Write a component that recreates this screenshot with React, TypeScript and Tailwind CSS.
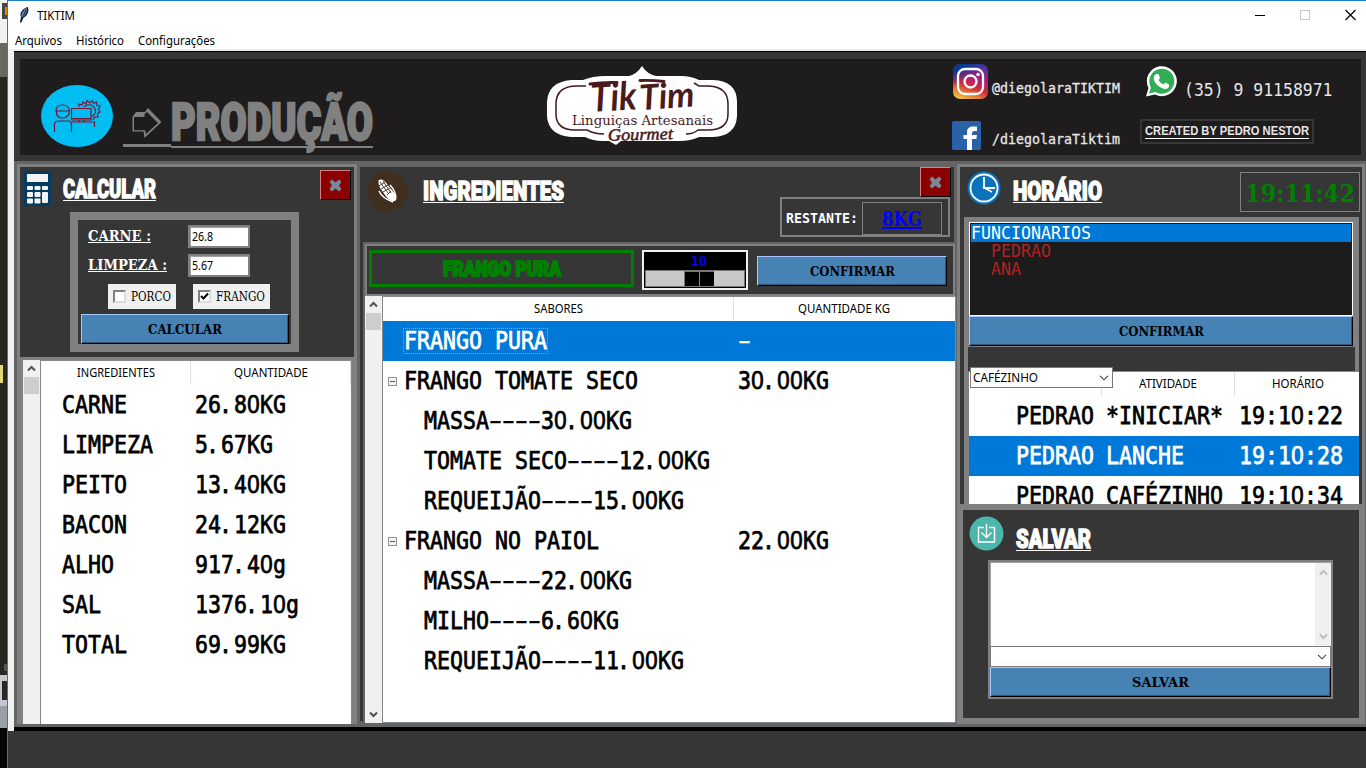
import { useLayoutEffect, useRef, useState, type ReactNode } from "react";

const UI = "font-['Noto_Sans','Open_Sans',sans-serif] text-[12px]";
const SERIF = "font-['DejaVu_Serif',serif] font-bold";
const MONO = "font-['DejaVu_Sans_Mono',monospace]";
const HEAVY = "font-['Roboto',sans-serif] font-black";

function Fit({ w, className = "", children }: { w: number; className?: string; children: ReactNode }) {
  const ref = useRef<HTMLSpanElement>(null);
  const [scale, setScale] = useState(1);
  useLayoutEffect(() => {
    if (ref.current) setScale(w / ref.current.getBoundingClientRect().width);
  }, [w]);
  return (
    <span className={`block shrink-0 whitespace-pre ${className}`} style={{ width: w }}>
      <span ref={ref} className="inline-block w-max origin-left" style={{ transform: `scaleX(${scale})` }}>
        {children}
      </span>
    </span>
  );
}

const glyphStyles: Record<string, string> = {
  "0": "inline-block w-[0.584em] text-center text-[1.03em] font-['Liberation_Sans',sans-serif] leading-none",
  "-": "inline-block w-[0.3344em] text-[1.8em] font-['Liberation_Sans',sans-serif] leading-[0.5] translate-y-[5px] scale-y-[0.55]",
  ".": "inline-block leading-none -translate-x-[0.09em]",
};

function Mono({ text, cell = 13, className = "" }: { text: string; cell?: number; className?: string }) {
  return (
    <Fit w={text.length * cell} className={`${MONO} ${className}`}>
      {text.split(/([0.-])/).map((part, i) =>
        glyphStyles[part] ? <span key={i} className={glyphStyles[part]}>{part}</span> : part,
      )}
    </Fit>
  );
}

function Heading({ text, w }: { text: string; w: number }) {
  return (
    <div className="flex flex-col text-white">
      <Fit w={w} className={`${HEAVY} h-[22px] text-[25px] leading-[23px] [-webkit-text-stroke:1.3px_white]`}>{text}</Fit>
      <div className="h-px bg-white" />
    </div>
  );
}

function Button({ text, w, className }: { text: string; w: number; className: string }) {
  return (
    <button className={`flex h-[30px] shrink-0 items-center justify-center border border-t-[#a6c8ff] border-l-[#a6c8ff] border-r-black border-b-black bg-[#4682b4] text-black shadow-[inset_-1px_-1px_0_#2f577a] ${className}`}>
      <Fit w={w} className={`${SERIF} text-[13.5px] leading-[28px]`}>{text}</Fit>
    </button>
  );
}

function CloseButton({ className }: { className: string }) {
  return (
    <button className={`flex w-[31px] shrink-0 items-center justify-center border border-t-[#d98080] border-l-[#d98080] border-r-black border-b-black bg-[#8b0000] ${className}`}>
      <svg width="13" height="13" viewBox="0 0 13 13">
        <path d="M3 .5 6.500 3.500 10 .5 12.500 3 10 6.500 12.500 10 10 12.500 6.500 9.500 3 12.500 .5 10 3 6.500 .5 3Z" fill="#778899" />
      </svg>
    </button>
  );
}

function Chevron({ down = false, color = "#505050" }: { down?: boolean; color?: string }) {
  return (
    <svg width="9" height="7" viewBox="0 0 9 7" className={down ? "rotate-180" : ""}>
      <path d="M1 5.5 4.5 2 8 5.5" fill="none" stroke={color} strokeWidth="2" />
    </svg>
  );
}

function ThinChevron() {
  return (
    <svg width="10" height="6" viewBox="0 0 10 6">
      <path d="M1 .8 5 4.8 9 .8" fill="none" stroke="#444" strokeWidth="1.1" />
    </svg>
  );
}

function DesktopEdge() {
  return (
    <div className="flex w-[7px] shrink-0 flex-col bg-[#272822]">
      <div className="h-[43px] bg-[#f2f2f2] pt-[3px] pl-[2px]">
        <div className="flex h-4 items-center justify-end bg-[#444]"><div className="h-2 w-0.5 bg-[#e08a00]" /></div>
      </div>
      <div className="h-[34px] bg-[#686963]" />
      <div className="mt-[288px] h-[18px] w-[3px] bg-[#e0d870]" />
      <div className="mt-[281px] ml-[4px] h-[7px] bg-[#555]" />
      <div className="mt-[4px] h-[31px] bg-[#c5c8ce] pt-[6px] pl-[2px]"><div className="h-[19px] bg-[#272822]" /></div>
      <div className="h-[22px] bg-[#9ba0a8]" />
      <div className="flex-1 bg-[#050505]" />
    </div>
  );
}

function TitleBar() {
  return (
    <div className="flex h-[31px] items-start pl-[10px]">
      <svg width="12" height="18" viewBox="0 0 12 18" className="mt-[5px]">
        <path d="M2 16 3 11C1 7 5 2 10 1 11 5 10 10 5 12L3 17Z" fill="#17202c" />
        <path d="M3.5 11C3 7 6 3 9 2 9 6 8 9 5 11Z" fill="#5687c4" />
        <path d="M3 16 8 4" stroke="#111" strokeWidth=".8" />
      </svg>
      <Fit w={38} className={`${UI} mt-[6px] ml-[7px] leading-[17px]`}>TIKTIM</Fit>
      <svg width="101" height="12" viewBox="0 0 101 12" className="mt-[8px] ml-auto mr-[10px]" fill="none">
        <path d="M0 6.5H10" stroke="#000" />
        <rect x="45.5" y="1.5" width="9" height="9" stroke="#c6c6c6" />
        <path d="M90.500 1 100.500 11M100.500 1 90.500 11" stroke="#000" strokeWidth="1.2" />
      </svg>
    </div>
  );
}

function MenuBar() {
  return (
    <div className={`flex h-[17px] gap-[14px] pl-[7px] leading-[18px] ${UI}`}>
      <Fit w={47}>Arquivos</Fit>
      <Fit w={48}>Histórico</Fit>
      <Fit w={77}>Configurações</Fit>
    </div>
  );
}

function Logo() {
  return (
    <svg width="190" height="82" viewBox="0 0 190 82" className="mt-[7px] ml-[174px] shrink-0">
      <path d="M24 14H36Q46 10 58 10H82Q90 8 95 0 100 8 109 10H134Q144 10 152 14H166Q190 15 190 36V50Q189 70 166 71H152Q144 75 132 75H74L69 79 62 75H56Q46 75 38 71H24Q1 69 0 50V36Q1 16 24 14Z" fill="#fff" />
      <path d="M39 20H30Q9 20 9 38V48Q9 64 28 64H40Q47 68 57 68M147 17 152 20H162Q181 21 181 38V48Q181 64 161 64H151Q146 68 139 68" fill="none" stroke="#3c1a1d" strokeWidth="1.5" />
      <path d="M43 18Q56 16 70 16.500M93 14.500Q106 14 117 15.500" fill="none" stroke="#4a1a1c" strokeLinecap="round" strokeWidth="3" />
      <g fill="#4a1a1c">
        <text x="44" y="45" fontSize="39" fontFamily="Lato" fontStyle="italic" fontWeight="700" textLength="46" lengthAdjust="spacingAndGlyphs" transform="rotate(-3 60 40)">Tik</text>
        <text x="93" y="43" fontSize="35" fontFamily="Lato" fontStyle="italic" fontWeight="700" textLength="55" lengthAdjust="spacingAndGlyphs" transform="rotate(-4 110 40)">Tim</text>
        <text x="25" y="58.500" fontSize="13.500" fontFamily="DejaVu Serif" textLength="141" lengthAdjust="spacingAndGlyphs">Linguiças Artesanais</text>
        <text x="61" y="74" fontSize="17" fontFamily="Liberation Serif" fontStyle="italic" stroke="#4a1a1c" strokeWidth=".5" textLength="65" lengthAdjust="spacingAndGlyphs" transform="rotate(-1.500 94 74)">Gourmet</text>
      </g>
    </svg>
  );
}

function Header() {
  return (
    <div className="ml-[6px] mt-[7px] flex h-[96px] w-[1341px] items-start bg-[#1e1c1d]">
      <svg width="72" height="62" viewBox="0 0 72 62" className="mt-[26px] ml-[21px] shrink-0">
        <ellipse cx="36" cy="31" rx="36" ry="31" fill="#00bdf2" />
        <g fill="none" stroke="#7c1534" strokeWidth="1.2">
          <path d="M15 26Q15 20 21.500 20T28.500 26ZM15.500 26V29Q17 33 21.500 33T28 29V26M13.500 47V39Q14 36 17 36H27Q30 36 30.500 40V47M30.500 37H53.500V42" />
          <path d="M30.500 23.500H50V33.500H30.500ZM30.500 31V35H50V31M38 35V37M43 35V37" />
          <path d="M38 22V19L41 20 42 17 45 19 46 15.500 49 18 51 15.500 52.500 18.500 55.500 17 56 20.500 59 21 57.500 24.500 59 27 56.500 28.500 57 32 53.500 32 52 35M43 22Q46 19 50 20 54.500 22 54.500 27 54 30 51 31.500" />
        </g>
      </svg>
      <div className="mt-[49px] ml-[10px] flex h-[39px] w-[48px] shrink-0 flex-col">
        <svg width="48" height="36" viewBox="0 0 48 36" className="shrink-0">
          <path d="M9.500 9 13 4H22L25 0 38.500 14 21.500 30 20.500 23.500H9.500Z" fill="#808080" />
          <path d="M11 9H21.500V6L24 4 35 15 23 26 22 22.300H11Z" fill="#1e1c1d" />
        </svg>
        <div className="h-[3px] shrink-0 bg-[#808080]" />
      </div>
      <div className="mt-[35px] w-[202px] shrink-0 text-[#808080]">
        <Fit w={202} className={`${HEAVY} h-[52px] text-[51px] leading-[58px] [-webkit-text-stroke:2.4px_#808080]`}>PRODUÇÃO</Fit>
        <div className="h-[2px] bg-[#808080]" />
      </div>
      <Logo />
      <div className="mt-[5px] ml-[215px] w-[188px] shrink-0">
        <div className="flex items-end">
          <svg width="36" height="35" viewBox="0 0 36 35" className="ml-[1px]">
            <defs>
              <linearGradient id="ig" x1=".7" y1="0" x2=".3" y2="1">
                <stop offset="0" stopColor="#4f35a0" /><stop offset=".35" stopColor="#a51e7e" /><stop offset=".62" stopColor="#d52c3a" /><stop offset="1" stopColor="#edbd3a" />
              </linearGradient>
              <linearGradient id="igb" x1="0" y1="0" x2=".3" y2=".5"><stop offset=".3" stopColor="#003c91" /><stop offset="1" stopColor="#003c91" stopOpacity="0" /></linearGradient>
            </defs>
            <rect width="35" height="35" rx="7" fill="url(#ig)" /><rect width="35" height="35" rx="7" fill="url(#igb)" />
            <g fill="none" stroke="#fff" strokeWidth="2.300"><rect x="5" y="5" width="25" height="25" rx="7" /><circle cx="17.500" cy="17.500" r="6" /></g>
            <circle cx="25" cy="10.500" r="1.700" fill="#fff" />
          </svg>
          <Mono text="@diegolaraTIKTIM" cell={8} className="mb-[2px] ml-[3px] text-[14.5px] leading-[18px] text-[#e6e6e6] [-webkit-text-stroke:0.3px_currentColor]" />
        </div>
        <div className="mt-[22px] flex items-end">
          <svg width="29" height="29" viewBox="0 0 29 29">
            <rect width="29" height="29" rx="2" fill="#2a62a8" />
            <path d="M15 29V18H11.500V14H15V11Q15 5.500 21 5.500H25V10H22Q20 10 20 12V14H25L24.300 18H20V29Z" fill="#fff" />
          </svg>
          <Mono text="/diegolaraTiktim" cell={8} className="mb-[2px] ml-[11px] text-[14.5px] leading-[18px] text-[#e6e6e6] [-webkit-text-stroke:0.3px_currentColor]" />
        </div>
      </div>
      <div className="mt-[7px] w-[200px]">
        <div className="flex h-[31px] items-start">
          <svg width="31" height="31" viewBox="0 0 31 31" className="ml-[6px] shrink-0">
            <path d="M0 30.500 2.500 22A15 15 0 1 1 9 28.500Z" fill="#fff" />
            <path d="M3 27.500 5 21.500A12.500 12.500 0 1 1 9.500 26Z" fill="#2fae55" />
            <path d="M10 8H12.500L14 12 12.500 14Q14 17 17.500 18.500L19.500 16.500 23 18.500V21Q21 24 17 22.500 10 20 8 14 7 10 10 8Z" fill="#fff" />
          </svg>
          <Mono text="(35) 9 91158971" cell={9.9} className="mt-[13px] ml-[7px] text-[17.5px] leading-[22px] text-[#e6e6e6]" />
        </div>
        <div className="mt-[22px] h-[25px] w-[174px] border-2 border-[#363636] pt-[4px] pl-[3px]">
          <Fit w={164} className="h-[14px] border-b border-white font-['Liberation_Sans',sans-serif] text-[12px] leading-[13px] font-bold text-[#e6e6e6]">CREATED BY PEDRO NESTOR</Fit>
        </div>
      </div>
    </div>
  );
}

function Scrollbar({ className, bottom = false }: { className: string; bottom?: boolean }) {
  return (
    <div className={`flex shrink-0 flex-col items-center bg-[#f0f0f0] ${className}`}>
      <div className="flex h-[17px] items-center"><Chevron /></div>
      <div className="h-[17px] w-[15px] bg-[#cdcdcd]" />
      {bottom && <div className="mt-auto flex h-[17px] items-center"><Chevron down /></div>}
    </div>
  );
}

function Field({ label, w, value }: { label: string; w: number; value: string }) {
  return (
    <div className="flex h-[29px] items-start pl-[10px]">
      <div className="w-[100px] pt-[3px]">
        <Fit w={w} className={`${SERIF} h-[15px] border-b border-white text-[15px] leading-[16px] text-white`}>{label}</Fit>
      </div>
      <div className="flex h-[23px] w-[62px] items-center border-2 border-[#808080] bg-white pl-[2px] shadow-[inset_1px_1px_0_#a0a0a0]">
        <Fit w={value.length * 6 - 3} className={`${UI} leading-[17px]`}>{value}</Fit>
      </div>
    </div>
  );
}

function Check({ label, w, checked = false, className }: { label: string; w: number; checked?: boolean; className: string }) {
  return (
    <label className={`flex h-[25px] items-center bg-[#f0f0f0] pl-[5px] ${className}`}>
      <span className="flex size-[13px] items-center justify-center border-2 border-[#808080] border-r-[#ddd] border-b-[#ddd] bg-white">
        {checked && <svg width="9" height="9" viewBox="0 0 9 9" className="shrink-0"><path d="M1 4 3.500 6.500 8 1.500" fill="none" stroke="#000" strokeWidth="2" /></svg>}
      </span>
      <Fit w={w} className="ml-[5px] font-['DejaVu_Serif',serif] text-[12.5px] leading-[25px] text-black">{label}</Fit>
    </label>
  );
}

const ingredients = [
  ["CARNE", "26.80KG"], ["LIMPEZA", "5.67KG"], ["PEITO", "13.40KG"], ["BACON", "24.12KG"],
  ["ALHO", "917.40g"], ["SAL", "1376.10g"], ["TOTAL", "69.99KG"],
];

const ROW = "text-[24.2px] leading-[40px] [-webkit-text-stroke:0.75px_currentColor]";

function CalcPanel() {
  return (
    <section className="mt-[3px] ml-[3px] flex h-[560px] w-[340px] shrink-0 flex-col bg-[#808080] px-[3px] pt-[3px]">
      <div className="h-[190px] shrink-0 bg-[#363636]">
        <div className="flex h-[45px] items-start">
          <svg width="27" height="35" viewBox="0 0 27 35" className="mt-[4px] ml-[4px]">
            <rect width="27" height="35" rx="1" fill="#023c63" />
            <g fill="#f4f4f4"><rect x="3" y="3" width="21" height="8" /><rect x="3" y="15" width="6" height="4" rx="1" /><rect x="10.500" y="15" width="6" height="4" rx="1" /><rect x="18" y="15" width="6" height="4" rx="1" /><rect x="3" y="21" width="6" height="5" rx="1" /><rect x="10.500" y="21" width="6" height="5" rx="1" /><rect x="18" y="21" width="6" height="11" rx="1" /><rect x="3" y="27.500" width="6" height="5" rx="1" /><rect x="10.500" y="27.500" width="6" height="5" rx="1" /></g>
          </svg>
          <div className="mt-[11px] ml-[12px]"><Heading text="CALCULAR" w={93} /></div>
          <CloseButton className="mt-[3px] ml-auto mr-[3px] h-[30px]" />
        </div>
        <div className="ml-[50px] h-[140px] w-[229px] border-8 border-[#808080] pt-[5px]">
          <Field label="CARNE :" w={63} value="26.8" />
          <Field label="LIMPEZA :" w={79} value="5.67" />
          <div className="flex gap-[17px] pt-[1px] pl-[30px]">
            <Check label="PORCO" w={40} className="w-[68px]" />
            <Check label="FRANGO" w={49} checked className="w-[77px]" />
          </div>
          <Button text="CALCULAR" w={74} className="mt-[5px] ml-[3px] w-[208px]" />
        </div>
      </div>
      <div className="mt-[3px] flex flex-1 pl-[3px]">
        <Scrollbar className="w-[17px]" />
        <div className="w-[312px] border border-b-0 border-[#828790] bg-white">
          <div className={`flex h-[24px] leading-[23px] ${UI}`}>
            <div className="flex w-[150px] justify-center border-r border-[#e0e0e0]"><Fit w={78}>INGREDIENTES</Fit></div>
            <div className="flex flex-1 justify-center border-r border-[#e0e0e0]"><Fit w={74}>QUANTIDADE</Fit></div>
          </div>
          {ingredients.map(([name, qty]) => (
            <div key={name} className="flex h-[40px] pl-[21px]">
              <div className="w-[133px]"><Mono text={name} className={ROW} /></div>
              <Mono text={qty} className={ROW} />
            </div>
          ))}
        </div>
      </div>
    </section>
  );
}

const flavours: [string, string, string][] = [
  ["sel", "FRANGO PURA", "-"], ["open", "FRANGO TOMATE SECO", "30.00KG"],
  ["sub", "MASSA----30.00KG", ""], ["sub", "TOMATE SECO----12.00KG", ""], ["sub", "REQUEIJÃO----15.00KG", ""],
  ["open", "FRANGO NO PAIOL", "22.00KG"],
  ["sub", "MASSA----22.00KG", ""], ["sub", "MILHO----6.60KG", ""], ["sub", "REQUEIJÃO----11.00KG", ""],
];

function Corn() {
  return (
    <svg width="41" height="41" viewBox="0 0 41 41" className="mt-[4px] ml-[7px] shrink-0">
      <circle cx="20.500" cy="20.500" r="20" fill="#402f1f" />
      <path d="M11.500 9Q16 7 20 13L28 23Q31 28 28 30 23 31 18 24L13 17Q11 13 11.500 9Z" fill="#fff" />
      <path d="M13 11 21 22M16 10 24 22M12 15 18 11M14 18 21 14M16 21 23 17M20 24 24 20" stroke="#402f1f" strokeWidth=".9" />
      <path d="M12 20Q15 27 26 31M23 14Q28 19 29 26" fill="none" stroke="#fff" strokeWidth="1.500" />
    </svg>
  );
}

function Ingredients() {
  return (
    <section className="mt-[6px] ml-[3px] flex h-[557px] w-[597px] shrink-0 flex-col">
      <div className="flex h-[75px] w-[594px] shrink-0 bg-[#363636]">
        <Corn />
        <div className="mt-[13px] ml-[15px]"><Heading text="INGREDIENTES" w={141} /></div>
        <div className="ml-auto mr-[4px] flex w-[170px] flex-col">
          <CloseButton className="-mr-px h-[30px] self-end" />
          <div className="flex h-[40px] border-2 border-[#808080]">
            <Mono text="RESTANTE:" cell={8} className="mt-[10px] ml-[4px] text-[14.5px] leading-[18px] font-bold text-white" />
            <div className="mt-[3px] ml-[4px] flex h-[33px] w-[80px] justify-center border border-[#808080]">
              <Fit w={40} className={`${SERIF} mt-[6px] h-[20px] border-b-2 border-[#00f] text-[20px] leading-[20px] text-[#00f]`}>8KG</Fit>
            </div>
          </div>
        </div>
      </div>
      <div className="flex min-h-0 flex-1">
        <div className="h-[479px] w-[3px] shrink-0 bg-[#363636]" />
        <div className="ml-[2px] flex w-[592px] flex-col pt-[2px]">
          <div className="flex h-[52px] w-[590px] shrink-0 border-2 border-[#808080] bg-[#363636]">
            <div className="mt-[4px] ml-[2px] flex h-[37px] w-[265px] justify-center border-[3px] border-[#008000] text-[#008000]">
              <Fit w={118} className={`${HEAVY} text-[21px] leading-[33px] [-webkit-text-stroke:2px_#008000]`}>FRANGO PURA</Fit>
            </div>
            <div className="mt-[4px] ml-[8px] h-[40px] w-[106px] border-2 border-[#f0f0f0] bg-black px-[1px]">
              <div className="flex h-[18px] justify-center pl-[8px]"><Mono text="10" cell={8} className="text-[14.5px] leading-[18px] font-bold text-[#00f]" /></div>
              <div className="flex h-[17px] border border-[#777] bg-[#c8c8c8] pl-[38px]">
                <div className="flex h-[15px] w-[30px] justify-center border-t border-l border-[#777] bg-black"><div className="w-px bg-[#888]" /></div>
              </div>
            </div>
            <Button text="CONFIRMAR" w={85} className="mt-[10px] ml-[9px] w-[190px]" />
          </div>
          <div className="flex h-[427px]">
            <Scrollbar className="w-[17px]" bottom />
            <div className="w-[574px] border border-[#828790] bg-white">
              <div className={`flex h-[24px] leading-[23px] ${UI}`}>
                <div className="flex w-[351px] justify-center border-r border-[#e0e0e0]"><Fit w={49}>SABORES</Fit></div>
                <div className="flex flex-1 justify-center pr-[2px]"><Fit w={92}>QUANTIDADE KG</Fit></div>
              </div>
              {flavours.map(([kind, name, qty]) => (
                <div key={name} className={`flex h-[40px] items-center ${kind === "sel" ? "bg-[#0078d7] text-white" : "text-black"}`}>
                  <div className="flex w-[21px] shrink-0 pl-[5px]">
                    {kind === "open" && <div className="flex size-[9px] items-center justify-center border border-[#919191] bg-[#f4f4f4]"><div className="h-px w-[5px] bg-[#3d5a9a]" /></div>}
                  </div>
                  <div className={`flex w-[334px] shrink-0 ${kind === "sub" ? "pl-[20px]" : ""}`}>
                    <Mono text={name} className={`${ROW} ${kind === "sel" ? "h-[24px] leading-[24px]! outline-1 outline-dotted outline-[#ff8728]" : ""}`} />
                  </div>
                  {qty && <Mono text={qty} className={ROW} />}
                </div>
              ))}
            </div>
          </div>
        </div>
      </div>
    </section>
  );
}

const log = [
  ["PEDRAO", "*INICIAR*", "19:10:22"], ["PEDRAO", "LANCHE", "19:10:28"], ["PEDRAO", "CAFÉZINHO", "19:10:34"],
];

function SchedulePanel() {
  return (
    <div className="h-[337px] shrink-0 bg-[#363636]">
      <div className="flex h-[50px] items-start">
        <svg width="34" height="34" viewBox="0 0 34 34" className="mt-[4px] ml-[7px]">
          <circle cx="17" cy="17" r="16.500" fill="#0a73b9" />
          <g fill="none" stroke="#fff" strokeWidth="1.800"><circle cx="17" cy="17" r="13.500" /><path d="M17 6V17H28M16 16 25 21" /></g>
        </svg>
        <div className="mt-[13px] ml-[12px]"><Heading text="HORÁRIO" w={89} /></div>
        <div className="mt-[5px] ml-auto mr-[2px] flex h-[40px] w-[120px] justify-center border border-[#808080]">
          <Fit w={110} className={`${SERIF} text-[25px] leading-[41px] text-[#008000]`}>19:11:42</Fit>
        </div>
      </div>
      <div className="ml-[4px] flex h-[287px] w-[395px] flex-col bg-[#808080] pt-[5px] pl-[5px]">
        <div className={`h-[94px] w-[384px] shrink-0 border border-white bg-[#1c1c1c] p-px text-[18px] leading-[18px] ${MONO}`}>
          <div className="h-[18px] bg-[#0078d7] text-white"><Mono text="FUNCIONARIOS" cell={10} /></div>
          <div className="pl-[20px] text-[#b22222]"><Mono text="PEDRAO" cell={10} /><Mono text="ANA" cell={10} /></div>
        </div>
        <Button text="CONFIRMAR" w={85} className="w-[384px]" />
        <div className="relative -ml-px mt-px h-[24px] w-[387px] shrink-0 bg-[#363636]">
          <div className="absolute top-[20px] left-[2px] flex h-[21px] w-[143px] items-center justify-between border border-[#7a7a7a] bg-white pr-[3px] pl-[2px]">
            <Fit w={65} className={`${UI} leading-[19px]`}>CAFÉZINHO</Fit><ThinChevron />
          </div>
        </div>
        <div className="h-[133px] overflow-hidden border-t border-[#828790] bg-white">
          <div className={`flex h-[24px] pl-[132px] leading-[23px] ${UI}`}>
            <div className="flex w-[134px] justify-center border-x border-[#e0e0e0]"><Fit w={58}>ATIVIDADE</Fit></div>
            <div className="flex flex-1 justify-center pl-[2px]"><Fit w={52}>HORÁRIO</Fit></div>
          </div>
          {log.map(([who, act, time], i) => (
            <div key={time} className={`flex h-[40px] pl-[47px] ${i === 1 ? "bg-[#0078d7] text-white" : "text-black"}`}>
              <div className="w-[90px] shrink-0"><Mono text={who} className={ROW} /></div>
              <div className="w-[133px] shrink-0"><Mono text={act} className={ROW} /></div>
              <Mono text={time} className={ROW} />
            </div>
          ))}
        </div>
      </div>
    </div>
  );
}

function SavePanel() {
  return (
    <div className="mt-[6px] ml-[6px] h-[208px] w-[396px] bg-[#363636]">
      <div className="flex h-[50px] items-start">
        <svg width="35" height="35" viewBox="0 0 35 35" className="mt-[6px] ml-[6px]">
          <circle cx="17.500" cy="17.500" r="17" fill="#4db6ac" />
          <path d="M15 11.500H9.500V26H25.500V11.500H20M17.500 8V21M12.500 16.500 17.500 21.500 22.500 16.500" fill="none" stroke="#fff" strokeWidth="1.400" />
        </svg>
        <div className="mt-[18px] ml-[12px]"><Heading text="SALVAR" w={75} /></div>
      </div>
      <div className="ml-[25px] h-[139px] w-[345px] border-2 border-[#808080]">
        <div className="flex h-[84px] border-t border-l border-[#a0a0a0] bg-white">
          <div className="ml-auto flex w-4 flex-col items-center justify-between bg-[#f0f0f0] py-[6px]"><Chevron color="#bfbfbf" /><Chevron down color="#bfbfbf" /></div>
        </div>
        <div className="flex h-[21px] items-center justify-end border border-[#7a7a7a] bg-white pr-[3px]"><ThinChevron /></div>
        <Button text="SALVAR" w={57} className="w-full" />
      </div>
    </div>
  );
}

export default function App() {
  return (
    <div className="flex h-[768px] w-[1366px] overflow-hidden bg-[#363636] text-black">
      <DesktopEdge />
      <div className="flex w-[1359px] shrink-0 flex-col border-t border-l border-[#1a7fd4]">
        <div className="h-[48px] shrink-0 bg-white"><TitleBar /><MenuBar /></div>
        <div className="h-[2px] shrink-0 bg-[#f0f0f0]" />
        <div className="flex h-[680px] shrink-0 border-l-6 border-[#f0f0f0]">
          <main className="flex w-[1352px] shrink-0 flex-col border-t border-b-4 border-black">
            <div className="h-[109px] shrink-0"><div className="flex h-full flex-col"><Header /></div></div>
            <div className="flex h-[566px] shrink-0 items-start bg-[#646464]">
              <CalcPanel />
              <Ingredients />
              <section className="mt-[3px] h-[560px] w-[408px] shrink-0 bg-[#808080] pt-[3px]">
                <div className="ml-[3px] w-[402px]"><SchedulePanel /></div>
                <SavePanel />
              </section>
            </div>
          </main>
        </div>
      </div>
    </div>
  );
}
